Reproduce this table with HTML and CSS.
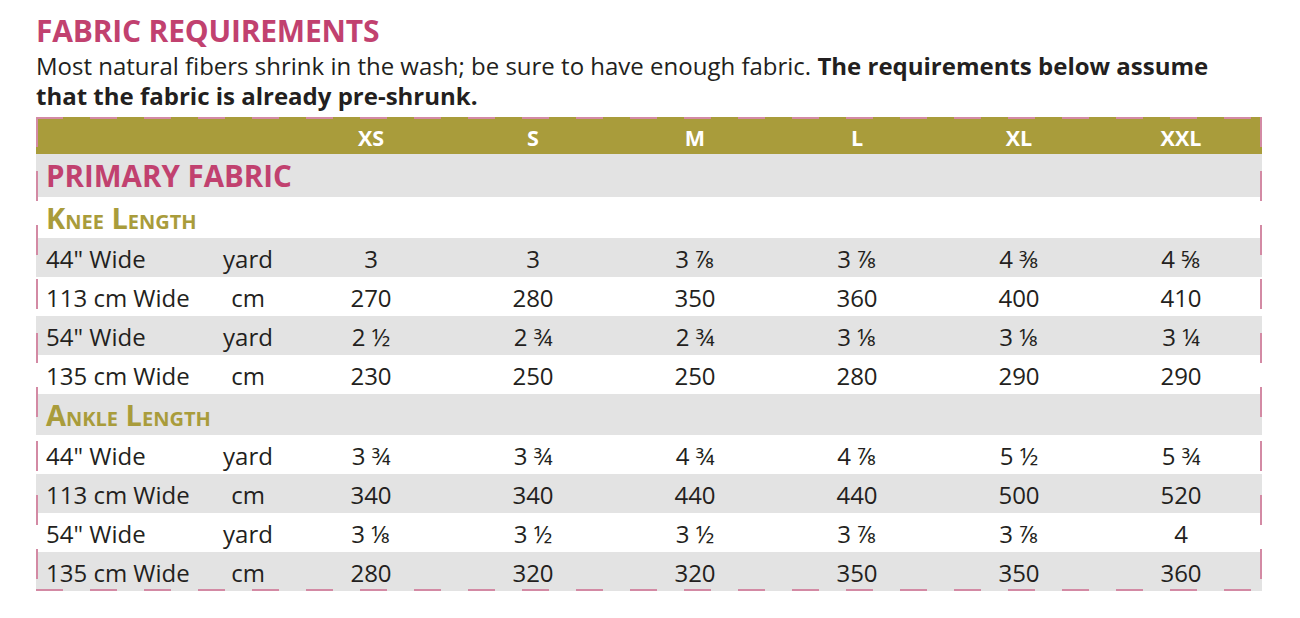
FILE: index.html
```html
<!DOCTYPE html>
<html lang="en">
<head>
<meta charset="utf-8">
<title>Fabric Requirements</title>
<link rel="stylesheet" href="styles.css">
</head>
<body>
<div class="page">
  <h1 class="title">FABRIC REQUIREMENTS</h1>
  <p class="intro">Most natural fibers shrink in the wash; be sure to have enough fabric. <b>The requirements below assume<br>that the fabric is already pre-shrunk.</b></p>
  <div class="table-wrap">
    <table class="req">
      <colgroup>
        <col class="c-label"><col class="c-unit">
        <col class="c-size"><col class="c-size"><col class="c-size"><col class="c-size"><col class="c-size"><col class="c-size">
      </colgroup>
      <thead>
        <tr class="head">
          <th></th><th></th><th>XS</th><th>S</th><th>M</th><th>L</th><th>XL</th><th>XXL</th>
        </tr>
      </thead>
      <tbody>
        <tr class="section gray"><td colspan="8">PRIMARY FABRIC</td></tr>
        <tr class="sub"><td colspan="8">Knee Length</td></tr>
        <tr class="data gray"><td>44" Wide</td><td>yard</td><td>3</td><td>3</td><td>3 ⅞</td><td>3 ⅞</td><td>4 ⅜</td><td>4 ⅝</td></tr>
        <tr class="data"><td>113 cm Wide</td><td>cm</td><td>270</td><td>280</td><td>350</td><td>360</td><td>400</td><td>410</td></tr>
        <tr class="data gray"><td>54" Wide</td><td>yard</td><td>2 ½</td><td>2 ¾</td><td>2 ¾</td><td>3 ⅛</td><td>3 ⅛</td><td>3 ¼</td></tr>
        <tr class="data"><td>135 cm Wide</td><td>cm</td><td>230</td><td>250</td><td>250</td><td>280</td><td>290</td><td>290</td></tr>
        <tr class="sub gray"><td colspan="8">Ankle Length</td></tr>
        <tr class="data"><td>44" Wide</td><td>yard</td><td>3 ¾</td><td>3 ¾</td><td>4 ¾</td><td>4 ⅞</td><td>5 ½</td><td>5 ¾</td></tr>
        <tr class="data gray"><td>113 cm Wide</td><td>cm</td><td>340</td><td>340</td><td>440</td><td>440</td><td>500</td><td>520</td></tr>
        <tr class="data"><td>54" Wide</td><td>yard</td><td>3 ⅛</td><td>3 ½</td><td>3 ½</td><td>3 ⅞</td><td>3 ⅞</td><td>4</td></tr>
        <tr class="data gray"><td>135 cm Wide</td><td>cm</td><td>280</td><td>320</td><td>320</td><td>350</td><td>350</td><td>360</td></tr>
      </tbody>
    </table>
  </div>
</div>
</body>
</html>
```
FILE: styles.css
```css
html, body {
  margin: 0;
  padding: 0;
  background: #ffffff;
}
body {
  font-family: "Open Sans", "Noto Sans", "DejaVu Sans", sans-serif;
  color: #231f20;
}
.page {
  padding: 13px 0 0 36px;
}
.title {
  margin: 0;
  font-size: 30px;
  line-height: 36px;
  font-weight: 700;
  color: #c1416f;
  letter-spacing: -0.2px;
}
.intro {
  margin: 2px 0 0 0;
  font-size: 24px;
  line-height: 30px;
  letter-spacing: 0;
}
.intro b {
  font-weight: 700;
}
.table-wrap {
  position: relative;
  width: 1226px;
  margin-top: 6px;
}
.table-wrap::after {
  content: "";
  position: absolute;
  inset: 0;
  pointer-events: none;
  background:
    repeating-linear-gradient(90deg, #d38aa4 0 27px, transparent 27px 54px) left top / 100% 2px no-repeat,
    repeating-linear-gradient(90deg, #d38aa4 0 27px, transparent 27px 54px) left bottom / 100% 2px no-repeat,
    repeating-linear-gradient(180deg, #d38aa4 0 30px, transparent 30px 54px) left top / 2px 100% no-repeat,
    repeating-linear-gradient(180deg, #d38aa4 0 30px, transparent 30px 54px) right top / 2px 100% no-repeat;
}
.req {
  width: 1226px;
  border-collapse: collapse;
  table-layout: fixed;
}
.c-label { width: 170px; }
.c-unit { width: 84px; }
.c-size { width: 162px; }
.req th, .req td {
  padding: 0;
  vertical-align: middle;
}
.head {
  background: #a99c3b;
  height: 37px;
}
.head th {
  color: #ffffff;
  font-size: 21.5px;
  font-weight: 700;
  text-align: center;
  padding-top: 3px;
}
.gray {
  background: #e3e3e3;
}
.section {
  height: 43px;
}
.section td {
  padding-left: 10px;
  font-size: 29.5px;
  font-weight: 700;
  color: #c1416f;
  letter-spacing: 0;
}
.sub {
  height: 41px;
}
.sub td {
  padding-left: 10px;
  font-size: 29px;
  font-weight: 700;
  font-variant: small-caps;
  color: #a99c3b;
  letter-spacing: 0;
}
.data {
  height: 39px;
}
.data td {
  font-size: 24px;
  text-align: center;
  padding-top: 1px;
  white-space: nowrap;
}
.data td:first-child {
  text-align: left;
  padding-left: 10px;
}
```
